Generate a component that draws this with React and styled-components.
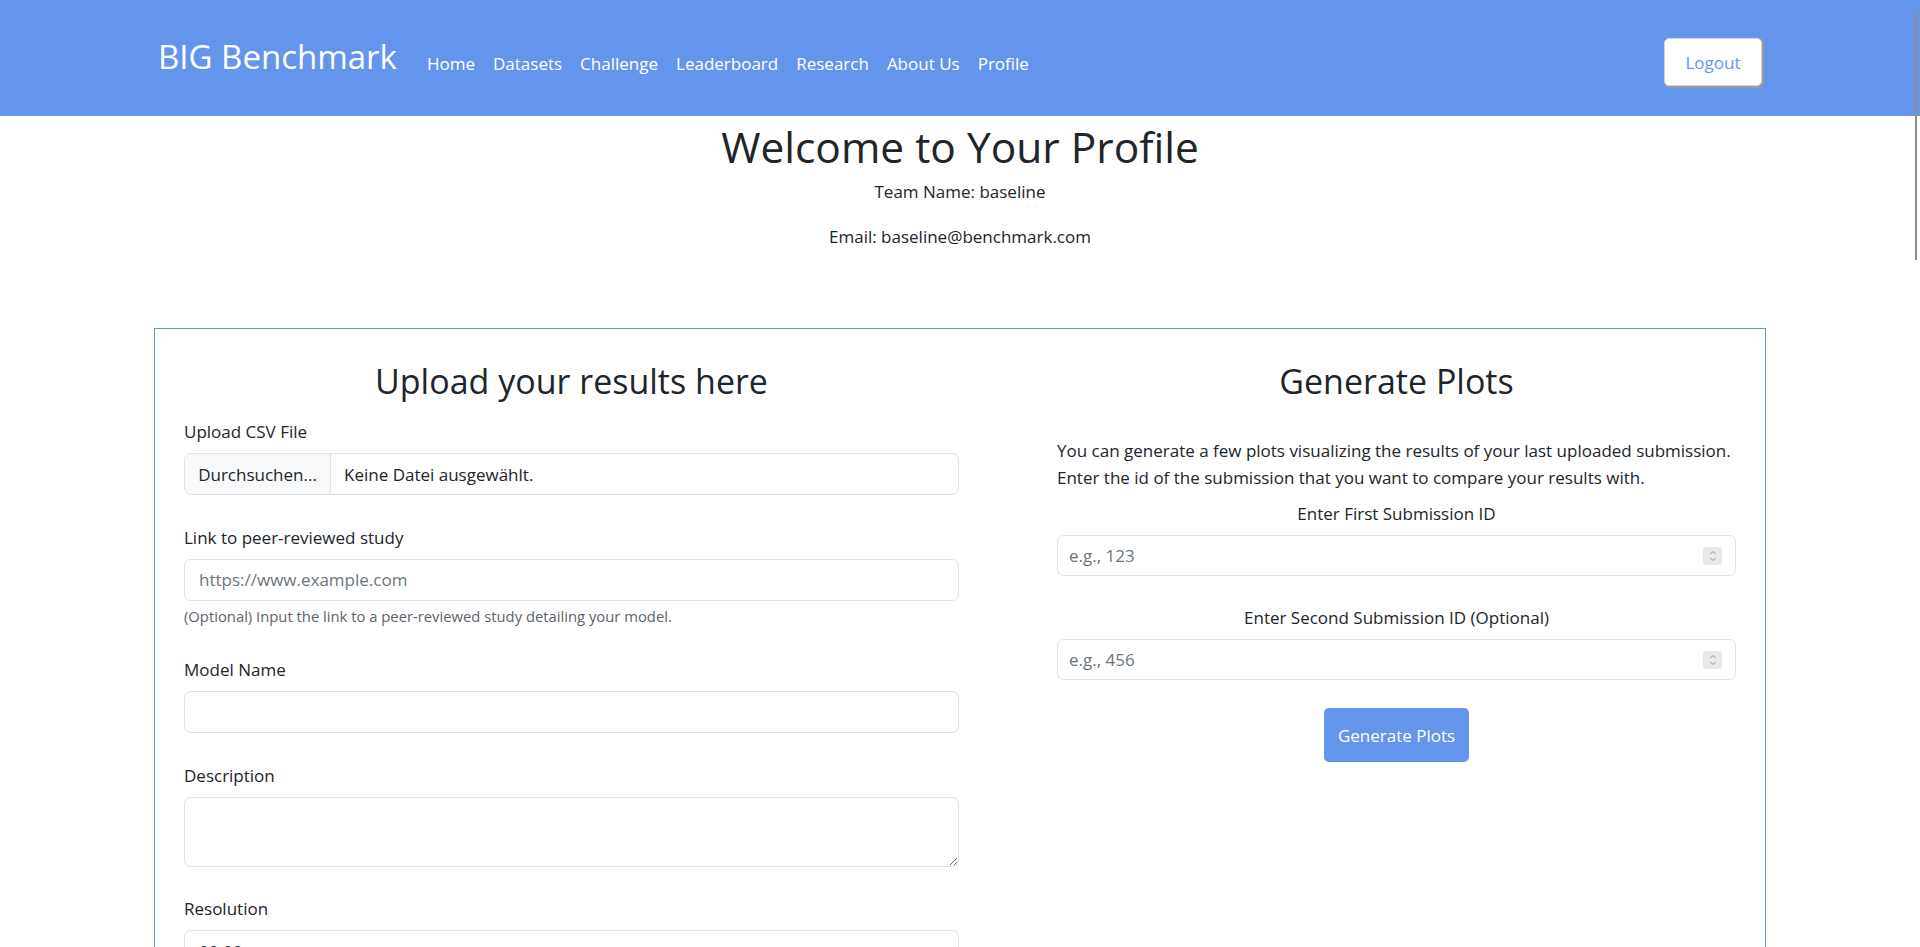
import React from "react";
import styled, { createGlobalStyle } from "styled-components";

const GlobalStyle = createGlobalStyle`
  html {
    scrollbar-width: none;
  }
  html::-webkit-scrollbar {
    display: none;
  }
  body {
    margin: 0;
    font-family: "Open Sans", "Noto Sans", sans-serif;
    font-size: 17px;
    line-height: 27px;
    color: #212529;
    background: #fff;
  }
  * {
    box-sizing: border-box;
  }
`;

const ScrollThumb = styled.div`
  position: fixed;
  top: 12px;
  right: 3px;
  width: 2px;
  height: 248px;
  background: #8c8c8c;
`;

const Navbar = styled.header`
  background: #6495ed;
  height: 116px;
`;

const NavInner = styled.div`
  width: 1612px;
  height: 100%;
  margin: 0 auto;
  padding: 0 4px;
  display: flex;
  align-items: center;
`;

const Brand = styled.a`
  font-size: 33px;
  line-height: 1.2;
  color: #fff;
  text-decoration: none;
  margin-right: 30px;
  margin-top: -2px;
`;

const NavLinks = styled.nav`
  display: flex;
  gap: 18px;
  margin-top: 11px;
`;

const NavLink = styled.a`
  color: #fff;
  font-size: 17px;
  text-decoration: none;
`;

const LogoutButton = styled.button`
  margin-left: auto;
  margin-top: 8px;
  width: 98px;
  height: 48px;
  background: #fff;
  color: #6495ed;
  font: inherit;
  font-size: 17px;
  border: 1px solid #d6d6d6;
  border-radius: 5px;
  box-shadow: 1px 1px 0 1px #9a9a9a;
  cursor: pointer;
`;

const ProfileHeader = styled.section`
  text-align: center;
`;

const Title = styled.h1`
  font-size: 42.5px;
  font-weight: 400;
  line-height: 54px;
  margin: 4px 0 4px;
`;

const InfoLine = styled.p`
  margin: 0 0 18px;
`;

const Card = styled.div`
  width: 1612px;
  margin: 78px auto 0;
  border: 1px solid #6495ed;
  padding: 31px 29px 40px;
  display: grid;
  grid-template-columns: 775px 679px;
  justify-content: space-between;
`;

const Column = styled.div`
  display: flex;
  flex-direction: column;
`;

const SectionTitle = styled.h2`
  font-size: 34px;
  font-weight: 400;
  line-height: 43px;
  text-align: center;
  margin: 0 0 15px;
`;

const FormGroup = styled.div`
  margin-bottom: ${(p) => (p.$tight ? "28px" : "28.5px")};
  text-align: ${(p) => (p.$center ? "center" : "left")};
`;

const Label = styled.label`
  display: block;
  margin-bottom: 8px;
`;

const TextInput = styled.input`
  display: block;
  width: 100%;
  height: 42px;
  padding: 0 14px;
  font: inherit;
  color: #212529;
  border: 1px solid #dee2e6;
  border-radius: 6.75px;
  background: #fff;
  &::placeholder {
    color: #6c757d;
  }
`;

const TextArea = styled.textarea`
  display: block;
  width: 100%;
  height: 70px;
  padding: 7px 14px;
  font: inherit;
  border: 1px solid #dee2e6;
  border-radius: 6.75px;
`;

const FileField = styled.div`
  display: flex;
  height: 42px;
  border: 1px solid #dee2e6;
  border-radius: 6.75px;
  overflow: hidden;
`;

const FileButton = styled.div`
  width: 146px;
  display: flex;
  align-items: center;
  justify-content: center;
  background: #f8f9fa;
  border-right: 1px solid #dee2e6;
  white-space: nowrap;
`;

const FileName = styled.div`
  display: flex;
  align-items: center;
  padding-left: 13px;
`;

const HelpText = styled.div`
  margin-top: 4px;
  font-size: 14.8px;
  line-height: 23px;
  color: #5c636a;
`;

const Intro = styled.p`
  margin: 19px 0 9px;
  white-space: nowrap;
`;

const NumberField = styled.div`
  display: flex;
  align-items: center;
  height: 41px;
  padding: 0 13px 0 0;
  border: 1px solid #dee2e6;
  border-radius: 6.75px;
  background: #fff;
`;

const NumberInput = styled.input`
  flex: 1;
  height: 100%;
  border: none;
  outline: none;
  background: transparent;
  font: inherit;
  padding: 0 0 0 11px;
  &::placeholder {
    color: #6c757d;
  }
`;

const Spinner = styled.div`
  width: 19px;
  height: 18px;
  background: #e9e9ed;
  border-radius: 2px;
  display: flex;
  align-items: center;
  justify-content: center;
`;

const PrimaryButton = styled.button`
  align-self: center;
  height: 54px;
  padding: 0 14px;
  background: #6495ed;
  color: #fff;
  font: inherit;
  border: none;
  border-radius: 5px;
  cursor: pointer;
`;

const SpinIcon = () => (
  <svg width="8" height="14" viewBox="0 0 8 14" fill="none" stroke="#8a8a8e" strokeWidth="1">
    <path d="M1.5 5 L4 2.5 L6.5 5" />
    <path d="M1.5 9 L4 11.5 L6.5 9" />
  </svg>
);

const navItems = ["Home", "Datasets", "Challenge", "Leaderboard", "Research", "About Us", "Profile"];

const App = () => {
  return (
    <>
      <GlobalStyle />
      <Navbar>
        <NavInner>
          <Brand href="#">BIG Benchmark</Brand>
          <NavLinks>
            {navItems.map((item) => (
              <NavLink key={item} href="#">
                {item}
              </NavLink>
            ))}
          </NavLinks>
          <LogoutButton>Logout</LogoutButton>
        </NavInner>
      </Navbar>

      <ProfileHeader>
        <Title>Welcome to Your Profile</Title>
        <InfoLine>Team Name: baseline</InfoLine>
        <InfoLine>Email: baseline@benchmark.com</InfoLine>
      </ProfileHeader>

      <Card>
        <Column>
          <SectionTitle>Upload your results here</SectionTitle>
          <FormGroup>
            <Label>Upload CSV File</Label>
            <FileField>
              <FileButton>Durchsuchen...</FileButton>
              <FileName>Keine Datei ausgewählt.</FileName>
            </FileField>
          </FormGroup>
          <FormGroup>
            <Label>Link to peer-reviewed study</Label>
            <TextInput placeholder="https://www.example.com" />
            <HelpText>(Optional) Input the link to a peer-reviewed study detailing your model.</HelpText>
          </FormGroup>
          <FormGroup>
            <Label>Model Name</Label>
            <TextInput />
          </FormGroup>
          <FormGroup>
            <Label>Description</Label>
            <TextArea />
          </FormGroup>
          <FormGroup>
            <Label>Resolution</Label>
            <TextInput defaultValue="00:00" />
          </FormGroup>
        </Column>

        <Column>
          <SectionTitle>Generate Plots</SectionTitle>
          <Intro>
            You can generate a few plots visualizing the results of your last uploaded submission.
            <br />
            Enter the id of the submission that you want to compare your results with.
          </Intro>
          <FormGroup $center $tight>
            <Label>Enter First Submission ID</Label>
            <NumberField>
              <NumberInput placeholder="e.g., 123" />
              <Spinner>
                <SpinIcon />
              </Spinner>
            </NumberField>
          </FormGroup>
          <FormGroup $center $tight>
            <Label>Enter Second Submission ID (Optional)</Label>
            <NumberField>
              <NumberInput placeholder="e.g., 456" />
              <Spinner>
                <SpinIcon />
              </Spinner>
            </NumberField>
          </FormGroup>
          <PrimaryButton>Generate Plots</PrimaryButton>
        </Column>
      </Card>
      <ScrollThumb />
    </>
  );
};

export default App;
